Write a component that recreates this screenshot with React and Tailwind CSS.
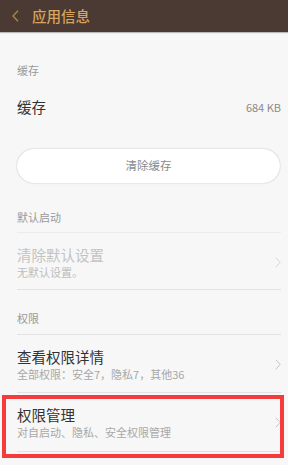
import React from 'react';

const Chevron = ({ className }) => (
  <svg width="6" height="11" viewBox="0 0 6 11" className={className} fill="none">
    <path d="M0.8 0.8 L5.2 5.5 L0.8 10.2" stroke="currentColor" strokeWidth="1" />
  </svg>
);

const SectionLabel = ({ children, className }) => (
  <div className={`ml-[17px] mr-[7px] text-[11px] leading-[14px] text-[#9a9a9a] ${className}`}>
    {children}
  </div>
);

const NavRow = ({ title, subtitle, disabled, className }) => (
  <div className={`ml-[17px] mr-[7px] flex items-center border-b border-[#e2e2e2] ${className}`}>
    <div className="flex-1 flex flex-col">
      <div className={`text-[14.5px] leading-[18px] ${disabled ? 'text-[#c3c3c3]' : 'text-[#333333]'}`}>
        {title}
      </div>
      <div className={`text-[11px] leading-[14px] mt-[1px] ${disabled ? 'text-[#bdbdbd]' : 'text-[#a8a8a8]'}`}>
        {subtitle}
      </div>
    </div>
    <Chevron className={disabled ? 'text-[#d6d6d6]' : 'text-[#c4c4c4]'} />
  </div>
);

export default function App() {
  return (
    <div
      className="relative w-[288px] h-[465px] overflow-hidden bg-[#f7f7f7]"
      style={{ fontFamily: '"Noto Sans CJK SC", "Noto Sans", sans-serif' }}
    >
      {/* Header */}
      <div className="h-[32px] bg-[#4a3a33] flex items-center shadow-[0_1px_1px_rgba(0,0,0,0.25)]">
        <svg width="7" height="12" viewBox="0 0 7 12" className="ml-[12px] text-[#b08552]" fill="none">
          <path d="M6 0.8 L1 6 L6 11.2" stroke="currentColor" strokeWidth="1.3" />
        </svg>
        <div className="ml-[13px] text-[14.5px] font-medium leading-[18px] text-[#d9a45e]">应用信息</div>
      </div>

      {/* Cache */}
      <SectionLabel className="pt-[31px]">缓存</SectionLabel>
      <div className="ml-[17px] mr-[7px] h-[46px] mt-[7px] flex items-center justify-between">
        <div className="text-[14.5px] leading-[18px] text-[#333333]">缓存</div>
        <div className="text-[11px] leading-[14px] text-[#8a8a8a]">684 KB</div>
      </div>
      <div className="pt-[19px] pl-[17px] pr-[8px]">
        <button
          type="button"
          className="w-full h-[34px] rounded-full bg-white shadow-[0_0_1.5px_rgba(0,0,0,0.3)] text-[11.5px] text-[#8a8a8a]"
        >
          清除缓存
        </button>
      </div>

      {/* Default launch */}
      <SectionLabel className="pt-[27px] pb-[8px] border-b border-[#ececec]">默认启动</SectionLabel>
      <NavRow
        className="pt-[13px] pb-[10px]"
        title="清除默认设置"
        subtitle="无默认设置。"
        disabled
      />

      {/* Permissions */}
      <SectionLabel className="pt-[21px] pb-[9px] border-b border-[#e2e2e2]">权限</SectionLabel>
      <NavRow
        className="pt-[13px] pb-[11px]"
        title="查看权限详情"
        subtitle="全部权限：安全7，隐私7，其他36"
      />
      <NavRow
        className="pt-[13px] pb-[12px]"
        title="权限管理"
        subtitle="对自启动、隐私、安全权限管理"
      />

      {/* Highlight annotation */}
      <div className="absolute left-[2px] top-[395px] w-[282px] h-[63px] border-4 border-[#f43c3c]" />
    </div>
  );
}
